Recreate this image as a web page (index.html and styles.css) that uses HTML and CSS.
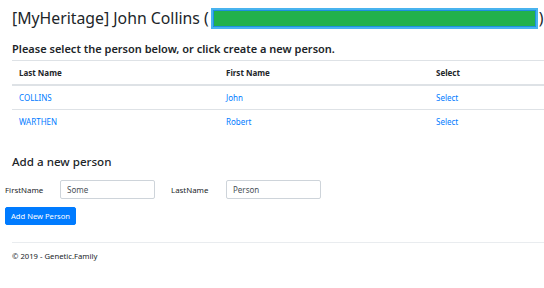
FILE: index.html
```html
<!DOCTYPE html>
<html>
<head>
<meta charset="utf-8">
<link rel="stylesheet" href="styles.css">
</head>
<body>
<div class="page">
  <h1 class="title">[MyHeritage] John Collins (<span class="redact"></span>)</h1>
  <h4 class="sub">Please select the person below, or click create a new person.</h4>
  <table class="people">
    <thead>
      <tr><th>Last Name</th><th>First Name</th><th>Select</th></tr>
    </thead>
    <tbody>
      <tr><td><a href="#">COLLINS</a></td><td><a href="#">John</a></td><td><a href="#">Select</a></td></tr>
      <tr><td><a href="#">WARTHEN</a></td><td><a href="#">Robert</a></td><td><a href="#">Select</a></td></tr>
    </tbody>
  </table>
  <h4 class="add-title">Add a new person</h4>
  <form class="add-form">
    <div class="form-row">
      <label class="lbl lbl-first">FirstName</label>
      <input class="field" type="text" value="Some">
      <label class="lbl lbl-last">LastName</label>
      <input class="field" type="text" value="Person">
    </div>
    <button class="btn" type="button">Add New Person</button>
  </form>
  <hr class="rule">
  <footer class="foot">&copy; 2019 - Genetic.Family</footer>
</div>
</body>
</html>
```
FILE: styles.css
```css
html, body {
  margin: 0;
  padding: 0;
  background: #fff;
  overflow: hidden;
}
body {
  font-family: "Noto Sans", "Open Sans", sans-serif;
  color: #212529;
  width: 544px;
}
.page {
  padding-left: 12px;
  width: 532px;
}
.title {
  margin: 0;
  padding-top: 6px;
  font-size: 15.8px;
  font-weight: 400;
  line-height: 24px;
  display: flex;
  align-items: center;
  white-space: nowrap;
}
.redact {
  display: inline-block;
  box-sizing: border-box;
  width: 327px;
  height: 21px;
  background: #22b14c;
  border: 2px solid #48b3ee;
  box-shadow: inset 0 0 0 1px #1d8fe0;
  margin: 0 1px 0 2px;
}
.sub {
  margin: 0;
  margin-top: 11px;
  font-size: 11px;
  font-weight: 600;
  line-height: 16px;
}
.people {
  margin-top: 3px;
  border-collapse: collapse;
  width: 532px;
  table-layout: fixed;
  font-size: 8px;
}
.people th, .people td {
  text-align: left;
  padding: 0 7px;
  height: 23px;
  border-top: 1px solid #dee2e6;
  vertical-align: middle;
}
.people th {
  font-weight: 700;
  height: 23px;
  border-bottom: 2px solid #dee2e6;
}
.people th:nth-child(1) { width: 193px; }
.people th:nth-child(2) { width: 196px; }
.people a {
  color: #007bff;
  text-decoration: none;
}
.add-title {
  margin: 0;
  margin-top: 21px;
  font-size: 11.6px;
  font-weight: 500;
  line-height: 16px;
}
.add-form {
  margin: 0;
  margin-left: -7px;
  margin-top: 10px;
}
.form-row {
  display: flex;
  align-items: center;
  height: 19px;
}
.lbl {
  font-size: 7.9px;
  color: #212529;
}
.lbl-first { width: 55px; }
.lbl-last { width: 55px; margin-left: 16px; }
.field {
  box-sizing: border-box;
  width: 95px;
  height: 19px;
  border: 1px solid #ced4da;
  border-radius: 2px;
  padding: 0 6px;
  font-family: inherit;
  font-size: 8px;
  color: #495057;
  margin: 0;
}
.btn {
  display: block;
  margin-top: 8px;
  height: 18px;
  width: 71px;
  padding: 0;
  border: 1px solid #007bff;
  border-radius: 2px;
  background: #007bff;
  color: #fff;
  font-family: inherit;
  font-size: 7.6px;
}
.rule {
  margin: 17px 0 0 0;
  border: 0;
  border-top: 1px solid #e9ecef;
  width: 532px;
}
.foot {
  margin-top: 7px;
  font-size: 7.7px;
  line-height: 12px;
}
```
